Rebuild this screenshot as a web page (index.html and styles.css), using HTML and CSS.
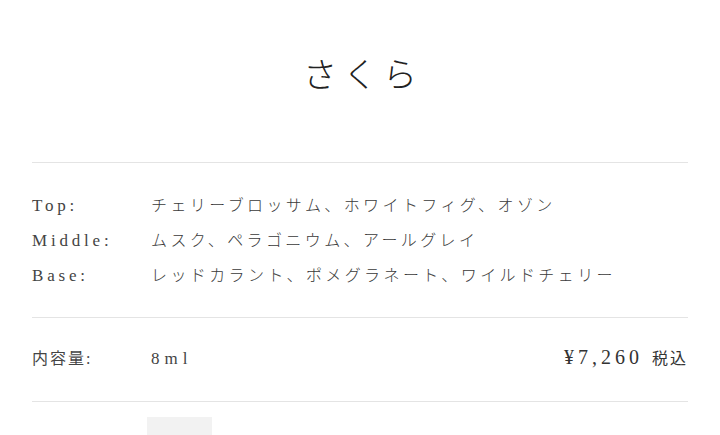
FILE: index.html
```html
<!DOCTYPE html>
<html lang="ja">
<head>
  <meta charset="UTF-8">
  <meta name="viewport" content="width=device-width, initial-scale=1.0">
  <title>さくら</title>
  <link rel="stylesheet" href="styles.css">
</head>
<body>
  <div class="container">
    <div class="header">
      <h1>さくら</h1>
    </div>

    <div class="notes">
      <div class="row">
        <span class="label">Top:</span>
        <span class="value">チェリーブロッサム、ホワイトフィグ、オゾン</span>
      </div>
      <div class="row">
        <span class="label">Middle:</span>
        <span class="value">ムスク、ペラゴニウム、アールグレイ</span>
      </div>
      <div class="row">
        <span class="label">Base:</span>
        <span class="value">レッドカラント、ポメグラネート、ワイルドチェリー</span>
      </div>
    </div>

    <div class="volume">
      <span class="label jp">内容量:</span>
      <span class="value size">8ml</span>
      <span class="price">¥7,260 <small>税込</small></span>
    </div>

    <div class="options">
      <div class="swatch"></div>
    </div>
  </div>
</body>
</html>
```

FILE: styles.css
```css
* {
  box-sizing: border-box;
  margin: 0;
  padding: 0;
}

body {
  background: #fff;
  color: #3a3a3a;
  font-family: 'Liberation Serif', 'Noto Sans CJK JP', serif;
}

.container {
  padding: 0 32px;
}

.header {
  height: 163px;
  display: flex;
  justify-content: center;
  align-items: center;
  padding-bottom: 18px;
  border-bottom: 1px solid #e4e4e4;
}

.header h1 {
  font-weight: 300;
  font-size: 34px;
  letter-spacing: 6px;
  color: #222;
  padding-left: 6px;
}

.notes {
  padding: 25px 0 24px;
  border-bottom: 1px solid #e4e4e4;
}

.row {
  display: flex;
  align-items: baseline;
  height: 35px;
  line-height: 35px;
}

.label {
  width: 119px;
  flex-shrink: 0;
  font-size: 17px;
  letter-spacing: 3.8px;
  color: #444;
}

.label.jp {
  font-size: 16px;
  letter-spacing: 2px;
}

.value {
  font-size: 16px;
  font-weight: 300;
  letter-spacing: 3.4px;
}

.volume {
  display: flex;
  align-items: baseline;
  height: 84px;
  padding-top: 24px;
  line-height: 30px;
  border-bottom: 1px solid #e4e4e4;
}

.size {
  font-size: 17px;
  letter-spacing: 5px;
  color: #444;
}

.price {
  margin-left: auto;
  font-size: 20px;
  letter-spacing: 4px;
  color: #333;
}

.price small {
  font-size: 16px;
  letter-spacing: 2px;
}

.options {
  padding: 15px 0 0 115px;
}

.swatch {
  width: 65px;
  height: 19px;
  background: #f2f2f2;
}
```
